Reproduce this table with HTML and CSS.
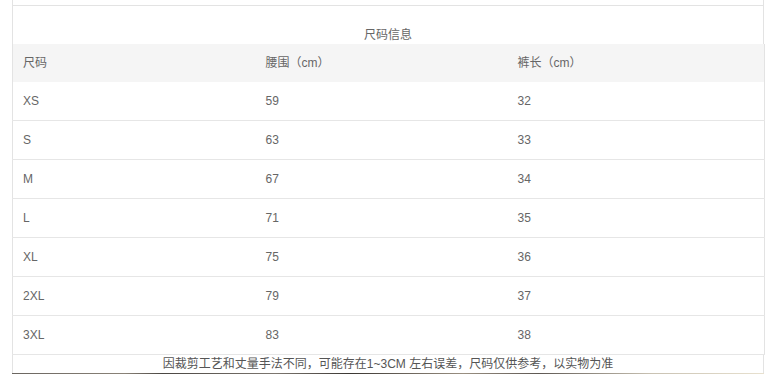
FILE: index.html
```html
<!DOCTYPE html>
<html lang="zh">
<head>
<meta charset="utf-8">
<link rel="stylesheet" href="styles.css">
</head>
<body>
<div class="page">
  <div class="top"></div>
  <div class="title">尺码信息</div>
  <table class="sizes">
    <colgroup><col class="c1"><col class="c2"><col class="c3"></colgroup>
    <thead>
      <tr><th>尺码</th><th>腰围（cm）</th><th>裤长（cm）</th></tr>
    </thead>
    <tbody>
      <tr><td>XS</td><td>59</td><td>32</td></tr>
      <tr><td>S</td><td>63</td><td>33</td></tr>
      <tr><td>M</td><td>67</td><td>34</td></tr>
      <tr><td>L</td><td>71</td><td>35</td></tr>
      <tr><td>XL</td><td>75</td><td>36</td></tr>
      <tr><td>2XL</td><td>79</td><td>37</td></tr>
      <tr><td>3XL</td><td>83</td><td>38</td></tr>
    </tbody>
  </table>
  <div class="note">因裁剪工艺和丈量手法不同，可能存在1~3CM 左右误差，尺码仅供参考，以实物为准</div>
  <div class="photo"></div>
</div>
</body>
</html>
```
FILE: styles.css
```css
html, body {
  margin: 0;
  padding: 0;
  background: #fff;
  overflow: hidden;
}
body {
  font-family: "Liberation Sans", Arial, "Noto Sans CJK SC", sans-serif;
  font-size: 12px;
  color: #666;
}
.page {
  margin-left: 12px;
  width: 752px;
}
.top {
  height: 5px;
  border-left: 1px solid #e3e3e3;
  border-right: 1px solid #e3e3e3;
  border-bottom: 1px solid #e3e3e3;
}
.title {
  height: 38px;
  box-sizing: border-box;
  padding-top: 21px;
  line-height: 16px;
  text-align: center;
  border-left: 1px solid #e3e3e3;
  border-right: 1px solid #e3e3e3;
  color: #666;
}
.sizes {
  width: 752px;
  border-collapse: collapse;
  table-layout: fixed;
  border-left: 1px solid #e3e3e3;
  border-right: 1px solid #e3e3e3;
}
.c1 { width: 243px; }
.c2 { width: 252px; }
.c3 { width: 257px; }
.sizes th, .sizes td {
  text-align: left;
  font-weight: normal;
  padding: 0 0 0 10px;
  height: 38px;
  line-height: 16px;
  color: #666;
}
.sizes thead tr {
  background: #f5f5f5;
}
.sizes tbody tr {
  border-bottom: 1px solid #e6e6e6;
}
.note {
  height: 18px;
  line-height: 18px;
  text-align: center;
  border-left: 1px solid #e3e3e3;
  border-right: 1px solid #e3e3e3;
  color: #555;
  font-size: 12px;
}
.photo {
  height: 4px;
  background: linear-gradient(90deg, #6a6560 0%, #8a8378 15%, #4a4642 20%, #7d7770 35%, #3b3733 45%, #9a9082 60%, #5e5853 70%, #c9c2b3 85%, #e8e1cf 100%);
}
```
